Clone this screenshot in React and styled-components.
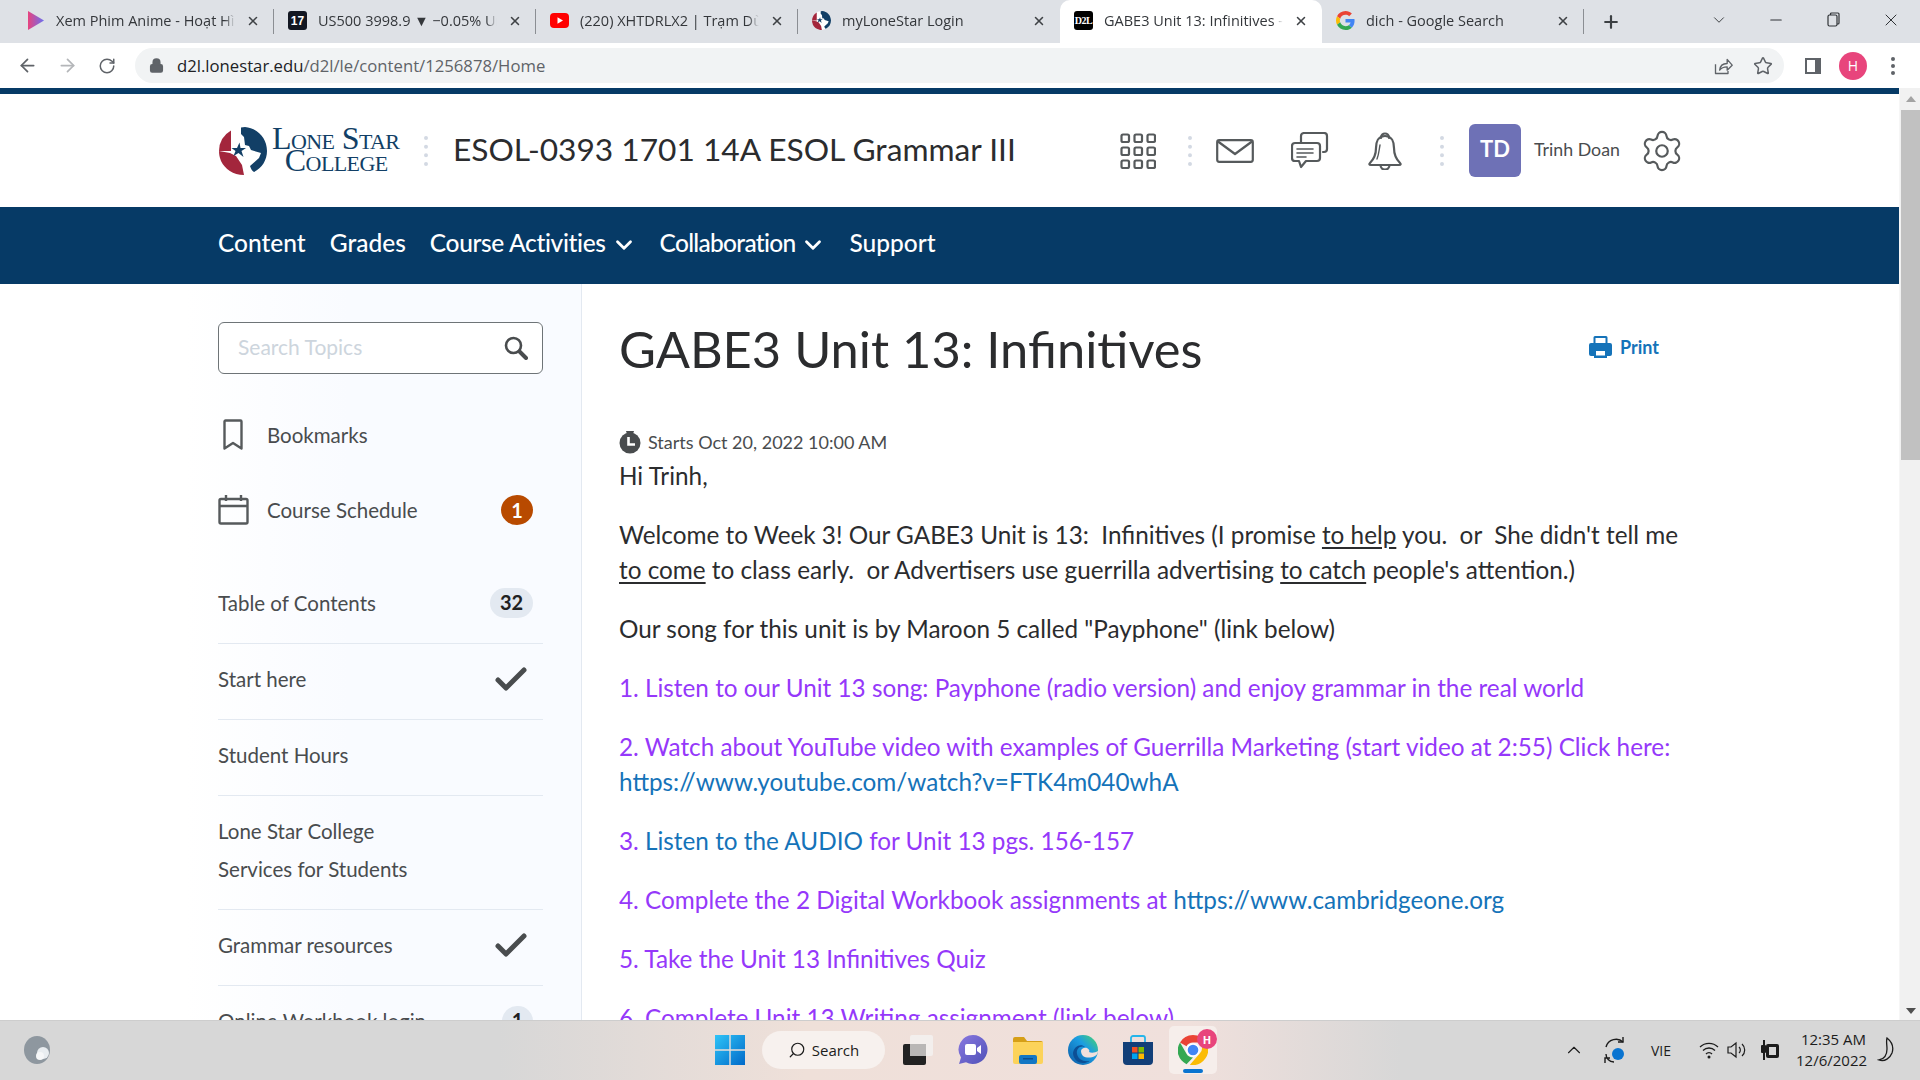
import React from "react";
import styled, { createGlobalStyle } from "styled-components";
import { ArrowLeft, ArrowRight, RotateCw, Lock, Star, Plus, X, Minus, ChevronDown, ChevronUp, Settings, Search as SearchIcon } from "lucide-react";

const Global = createGlobalStyle`
  html, body { margin: 0; padding: 0; background: #fff; }
  * { box-sizing: border-box; }
  #root { width: 1920px; height: 1080px; overflow: hidden; }
`;

const Shell = styled.div`
  width: 1920px; height: 1080px; display: flex; flex-direction: column; overflow: hidden;
  font-family: Lato, "Noto Sans", sans-serif; color: #202122;
`;

/* browser chrome */
const TabBar = styled.div`
  height: 43px; flex: none; background: #dee1e6; display: flex; align-items: stretch; padding-left: 12px;
  font-family: "Open Sans", "Noto Sans", sans-serif;
`;
const Tab = styled.div`
  position: relative; width: 262px; flex: none; display: flex; align-items: center; gap: 11px; padding: 0 14px 2px;
  background: ${p => (p.$active ? "#fff" : "transparent")};
  border-radius: ${p => (p.$active ? "10px 10px 0 0" : "0")};
  &::after {
    content: ""; display: ${p => (p.$sep ? "block" : "none")}; position: absolute; right: 0; top: 9px; width: 1px; height: 25px; background: #8b8e93;
  }
`;
const Favicon = styled.span`
  width: 19px; height: 19px; flex: none; display: flex; align-items: center; justify-content: center;
`;
const BadgeIcon = styled(Favicon)`
  background: ${p => p.$bg}; color: #fff; border-radius: ${p => p.$r || 3}px; font-size: ${p => p.$fs || 12}px; font-weight: 700;
  font-family: ${p => p.$serif ? '"Liberation Serif", serif' : '"Liberation Sans", sans-serif'};
  letter-spacing: ${p => p.$ls || 0}px; overflow: hidden;
`;
const TabTitle = styled.span`
  flex: 1; min-width: 0; white-space: nowrap; overflow: hidden; font-size: 14.5px; color: #34373b;
  mask-image: linear-gradient(to right, #000 94%, transparent 100%);
`;
const CloseBox = styled.span`
  width: 14px; flex: none; display: flex; justify-content: center; color: #3f4246;
`;
const NewTab = styled.div`
  width: 54px; display: flex; align-items: center; justify-content: center; color: #3c4043;
`;
const WinControls = styled.div`
  margin-left: auto; display: flex; align-items: center; padding-bottom: 4px;
`;
const WinBtn = styled.div`
  width: 57.5px; height: 36px; display: flex; align-items: center; justify-content: center; color: #2f3236;
`;
const Toolbar = styled.div`
  height: 45px; flex: none; background: #fff; display: flex; align-items: center; padding: 0 7px;
  font-family: "Open Sans", "Noto Sans", sans-serif;
`;
const ToolBtn = styled.div`
  width: 40px; height: 35px; flex: none; display: flex; align-items: center; justify-content: center;
  color: ${p => p.$dim ? "#b4b6b9" : "#5f6368"};
`;
const AddressBar = styled.div`
  flex: 1; height: 35px; margin: 0 9px 0 8px; border-radius: 18px; background: #f1f3f4; display: flex; align-items: center; padding: 0 1px 0 14px; color: #5f6368;
`;
const Url = styled.div`
  flex: 1; margin-left: 13px; font-size: 16.7px; color: #5f6368; white-space: nowrap;
  b { font-weight: 400; color: #202124; }
`;
const Avatar = styled.span`
  width: 28px; height: 28px; border-radius: 50%; background: #e8457c; color: #fff; display: flex; align-items: center; justify-content: center; font-size: 14px;
`;

/* page */
const PageRow = styled.div`
  flex: 1; min-height: 0; display: flex;
`;
const Viewport = styled.div`
  flex: 1; min-width: 0; display: flex; flex-direction: column; overflow: hidden; background: #fff;
`;
const Stripe = styled.div`
  height: 6px; flex: none; background: #063a66;
`;
const Scrollbar = styled.div`
  width: 21px; flex: none; background: #f1f1f1; display: flex; flex-direction: column; align-items: flex-end; border-left: 1px solid #f6f6f6;
`;
const ArrowCell = styled.div`
  width: 19px; height: ${p => p.$h}px; display: flex; align-items: ${p => p.$end ? "flex-end" : "center"}; justify-content: center; padding-bottom: ${p => p.$end ? 6 : 0}px;
  &::before {
    content: ""; width: 0; height: 0; border-left: 5px solid transparent; border-right: 5px solid transparent;
    ${p => p.$down ? "border-top: 6px solid #505050;" : "border-bottom: 6px solid #a3a3a3;"}
  }
`;
const Thumb = styled.div`
  width: 19px; height: 350px; background: #c1c1c1; flex: none;
`;
const Grow = styled.div`flex: 1;`;

const Header = styled.header`
  height: 113px; flex: none; display: flex; align-items: center; padding: 0 218px 0 219px;
`;
const LogoWrap = styled.div`
  display: flex; align-items: center; gap: 5px; width: 181px;
`;
const LogoText = styled.div`
  font-family: "Liberation Serif", serif; font-variant: small-caps; color: #123f66; font-size: 32px; line-height: 22px; text-align: center; white-space: nowrap;
  letter-spacing: -0.6px; margin-top: -3px;
  span { display: block; }
  span + span { margin-left: 1px; }
`;
const DotDivider = styled.div`
  width: 4px; height: 30px; flex: none; border-left: 4px dotted #d3d9e3; margin-left: ${p => p.$ml}px;
`;
const CourseTitle = styled.h1`
  margin: 0 0 3px 25px; font-size: 31.7px; font-weight: 400; white-space: nowrap; color: #2b2c2e;
`;
const HeadRight = styled.div`
  margin-left: auto; display: flex; align-items: center; color: #565a5c;
`;
const HeadIconGroup = styled.div`
  display: flex; gap: 37px; margin-left: 24px;
`;
const HeadIcon = styled.span`
  width: 38px; height: 38px; display: flex; align-items: center; justify-content: center;
`;
const UserTile = styled.div`
  width: 52px; height: 53px; margin-left: 25px; background: #6e71b6; border-radius: 6px; color: #fff; font-weight: 700; font-size: 22px;
  display: flex; align-items: center; justify-content: center; padding-bottom: 4px;
`;
const UserName = styled.div`
  margin-left: 13px; width: 85px; font-size: 17.8px; white-space: nowrap; color: #494c4e; padding-bottom: 4px;
`;
const GearWrap = styled.span`
  margin: 0 -4px 0 20px; display: flex; color: #565a5c;
`;

const Nav = styled.nav`
  height: 77px; flex: none; background: #063a66; display: flex; align-items: center; padding: 0 0 7px 218px; color: #fff; gap: 24px;
`;
const NavItem = styled.a`
  display: flex; align-items: center; font-size: 24.5px; font-weight: 500; color: #fff; white-space: nowrap;
  letter-spacing: ${p => p.$ls || 0}px;
  svg { margin: 5px -1px 0 5px; }
`;
const Body = styled.div`
  flex: 1; min-height: 0; display: flex; overflow: hidden;
`;
const Sidebar = styled.aside`
  width: 582px; flex: none; padding: 38px 38px 0 218px; border-right: 1px solid #e3e9f1;
  background: linear-gradient(to right, #fff 32%, #f9fbff 60%);
`;
const SearchBox = styled.div`
  height: 52px; border: 1px solid #6e7477; border-radius: 6px; background: #fff; display: flex; align-items: center; justify-content: space-between; padding: 0 14px 0 19px;
  color: #494c4e;
`;
const Placeholder = styled.span`
  font-size: 21px; color: #cdd5dd; padding-bottom: 4px;
`;
const QuickLinks = styled.div`
  margin-top: 23px;
`;
const QuickLink = styled.div`
  height: 75px; display: flex; align-items: center; font-size: 20.5px; color: #494c4e;
`;
const QuickIcon = styled.span`
  width: 49px; flex: none; display: flex; padding-left: ${p => p.$pl || 0}px; color: #565a5c;
`;
const CountDot = styled.span`
  margin-left: auto; margin-right: 10px; width: 32px; height: 30px; border-radius: 50%; background: #b84a00; color: #fff; font-weight: 700; font-size: 20px; display: flex; align-items: center; justify-content: center;
`;
const TocList = styled.div`
  margin-top: 21px;
`;
const TocRow = styled.div`
  min-height: 76px; padding: 16px 10px 21px 0; display: flex; align-items: center; justify-content: space-between; font-size: 20.5px; line-height: 38px; color: #494c4e;
  border-bottom: 1px solid #e3e9f1;
`;
const Pill = styled.span`
  min-width: ${p => p.$w}px; height: 30px; border-radius: 15px; background: #e3e9f1; color: #202122; font-weight: 700; font-size: 20px; line-height: 28px; text-align: center;
`;
const CheckWrap = styled.span`
  display: flex; margin-right: 6px; margin-top: -1px;
`;

const Main = styled.main`
  flex: 1; min-width: 0; padding: 36px 0 0 37px; overflow: hidden;
`;
const Column = styled.div`
  width: 1070px;
`;
const TitleRow = styled.div`
  display: flex; justify-content: space-between; align-items: center; padding-right: 30px; height: 58px; margin-bottom: 48px;
`;
const PageTitle = styled.h2`
  margin: 0; font-size: 50.6px; font-weight: 400; line-height: 58px; color: #2b2c2e; white-space: nowrap;
`;
const PrintLink = styled.a`
  display: flex; align-items: center; gap: 8px; color: #1573b9; font-size: 18px; font-weight: 700; margin-bottom: 5px;
`;
const Meta = styled.div`
  height: 32px; display: flex; align-items: center; gap: 7px; font-size: 18px; color: #494c4e;
`;
const Para = styled.p`
  margin: 0 0 24px; font-size: 24.3px; line-height: 35px; color: #2b2c2e; white-space: pre-wrap;
  u { text-underline-offset: 3px; }
`;
const Visited = styled.span`color: #9538fa;`;
const Link = styled.span`color: #1573b9;`;

/* taskbar */
const Taskbar = styled.footer`
  height: 60px; flex: none; display: flex; align-items: center; padding: 0 0 1px 24px; border-top: 1px solid #cdcdcd;
  background: linear-gradient(90deg, #d7d7d7 0, #d7d7d7 26%, #efe0d9 42%, #f0e0dc 62%, #d7d7d7 73%, #d7d7d7 100%);
  font-family: "Open Sans", "Noto Sans", sans-serif; color: #1c1c1c;
`;
const TaskLeft = styled.div`
  width: 691px; flex: none; display: flex;
`;
const TaskCenter = styled.div`
  display: flex; align-items: center;
`;
const TaskSearch = styled.div`
  width: 123px; height: 38px; margin: 0 18px 0 17px; border-radius: 19px; background: #f7f1ee; display: flex; align-items: center; justify-content: center; gap: 6px; font-size: 15px;
  svg { transform: scaleX(-1); }
`;
const TaskApps = styled.div`
  display: flex; gap: 25px; align-items: center;
`;
const TaskIcon = styled.span`
  width: 30px; height: 30px; display: flex; align-items: center; justify-content: center;
`;
const ActiveApp = styled.div`
  position: relative; width: 48px; height: 48px; margin-left: 16px; background: #f6eeeb; border-radius: 5px; display: flex; align-items: center; justify-content: center;
  &::after { content: ""; position: absolute; left: 14px; bottom: 1px; width: 20px; height: 4px; border-radius: 2px; background: #0a74d0; }
`;
const HBadge = styled.span`
  position: absolute; right: 0; top: 3px; width: 20px; height: 20px; border-radius: 50%; background: #e8457c; color: #fff; font-size: 11px; font-weight: 700; display: flex; align-items: center; justify-content: center;
`;
const Tray = styled.div`
  margin-left: auto; display: flex; align-items: center; padding-right: 23px;
`;
const TrayItem = styled.span`
  width: ${p => p.$w}px; margin-left: ${p => p.$ml || 0}px; display: flex; align-items: center; justify-content: center; font-size: ${p => p.$fs || 15}px;
`;
const Clock = styled.div`
  width: 70px; margin-left: 14px; text-align: right; font-size: 15px; line-height: 21px; white-space: nowrap;
`;

/* icons */
const PlayFav = () => (
  <svg width="19" height="19" viewBox="0 0 19 19"><defs><linearGradient id="pf" x1="0" x2="1"><stop offset="0" stopColor="#e8437e" /><stop offset="1" stopColor="#6a6ff0" /></linearGradient></defs><path d="M2 0l16 9.500L2 19z" fill="url(#pf)" /></svg>
);
const YtFav = () => (
  <svg width="19" height="19" viewBox="0 0 19 19"><rect x="0" y="2" width="19" height="15" rx="4" fill="#f00" /><path d="M7.500 6.200l5.500 3.300-5.500 3.300z" fill="#fff" /></svg>
);
const LscMark = ({ s = 48 }) => (
  <svg width={s} height={s} viewBox="0 0 48 48">
    <circle cx="24" cy="24" r="24" fill="#fff" />
    <path d="M26 0C38 1 48 11 48 24c0 9-5 17-13 21-2-1-3-3-4-6l9-8 2-5-10-3-2-4-4-1-1-8-3-3V.5z" fill="#123f66" />
    <path d="M12 3.500A24 24 0 0 0 0 24h12V3.500z" fill="#a3263c" />
    <path d="M0 24c0 3 .5 6 1.500 8.500L2 34c4 8 12 14 23 14l-2-10-6-9-6-3z" fill="#a3263c" />
    <path d="M18 21l2.500-5.500 1 5.500 5.500 0-4.500 3 2 6-5-4-5 3 2-5-4-3z" fill="#123f66" />
  </svg>
);
const GoogleG = () => (
  <svg width="19" height="19" viewBox="0 0 48 48">
    <path fill="#EA4335" d="M24 9.500c3.500 0 6.700 1.200 9.200 3.600l6.900-6.900C35.900 2.400 30.400 0 24 0 14.600 0 6.500 5.400 2.600 13.200l8 6.200C12.500 13.700 17.800 9.500 24 9.500z" />
    <path fill="#4285F4" d="M46.900 24.500c0-1.600-.1-3.100-.4-4.500H24v9h12.900c-.6 3-2.200 5.500-4.700 7.200l7.700 6c4.500-4.200 7-10.300 7-17.700z" />
    <path fill="#FBBC05" d="M10.500 28.600c-.5-1.400-.8-3-.8-4.600s.3-3.200.8-4.600l-8-6.200C1 16.500 0 20.100 0 24s1 7.500 2.600 10.800l7.900-6.200z" />
    <path fill="#34A853" d="M24 48c6.500 0 11.900-2.100 15.900-5.800l-7.700-6c-2.200 1.400-4.900 2.300-8.200 2.300-6.200 0-11.500-4.200-13.400-9.900l-8 6.200C6.500 42.600 14.600 48 24 48z" />
  </svg>
);
const ShareIco = () => (
  <svg width="20" height="20" viewBox="0 0 24 24" fill="none" stroke="#5f6368" strokeWidth="1.600" strokeLinejoin="round"><path d="M3 10v11h15v-3" /><path d="M8 17c.5-5 4-8 9-8V4l6 7-6 6v-4c-4 0-7 1-9 4z" /></svg>
);
const PanelIco = () => (
  <svg width="18" height="18" viewBox="0 0 18 18"><path fill="#5f6368" fillRule="evenodd" d="M1 1h16v16H1zM3 3v12h8V3z" /></svg>
);
const Kebab = () => (
  <svg width="4" height="18" viewBox="0 0 4 18" fill="#5f6368"><circle cx="2" cy="2" r="2" /><circle cx="2" cy="9" r="2" /><circle cx="2" cy="16" r="2" /></svg>
);
const RestoreIco = () => (
  <svg width="13" height="15" viewBox="0 0 13 15" fill="none" stroke="#2f3236" strokeWidth="1.200"><rect x="1" y="3" width="9" height="11" rx="1.500" /><path d="M3.500 3V2a1 1 0 0 1 1-1H11a1 1 0 0 1 1 1v9a1 1 0 0 1-1 1h-1" /></svg>
);
const GridIco = () => (
  <svg width="36" height="36" viewBox="0 0 36 36" fill="none" stroke="#565a5c" strokeWidth="2.200">
    {[0, 13, 26].flatMap(y => [0, 13, 26].map(x => <rect key={`${x}-${y}`} x={x + 1.500} y={y + 1.500} width="7.500" height="7.500" rx="1.500" />))}
  </svg>
);
const MailIco = () => (
  <svg width="38" height="24" viewBox="0 0 38 24" fill="none" stroke="#565a5c" strokeWidth="2.200" strokeLinejoin="round"><rect x="1.200" y="1.200" width="35.600" height="21.600" rx="2" /><path d="M2 2.500L19 15 36 2.500" /></svg>
);
const ChatIco = () => (
  <svg width="38" height="37" viewBox="0 0 38 37" fill="none" stroke="#565a5c" strokeWidth="2.200" strokeLinejoin="round" strokeLinecap="round">
    <path d="M10 11V4a3 3 0 0 1 3-3h20a3 3 0 0 1 3 3v13a3 3 0 0 1-3 3h-1" />
    <path d="M4 11h22a3 3 0 0 1 3 3v12a3 3 0 0 1-3 3H15l-5 6-2-6H4a3 3 0 0 1-3-3V14a3 3 0 0 1 3-3z" />
    <path d="M6 17h16M6 21h16M6 25h9" strokeWidth="1.600" />
  </svg>
);
const BellIco = () => (
  <svg width="36" height="38" viewBox="0 0 36 38" fill="none" stroke="#565a5c" strokeWidth="2.200" strokeLinejoin="round" strokeLinecap="round">
    <path d="M14 6c0-6 8-6 8 0" />
    <path d="M18 4c-7 0-9 6-9 12 0 7-2 11-6 15-1 1-1 2 1 2h28c2 0 2-1 1-2-4-4-6-8-6-15 0-6-2-12-9-12z" />
    <path d="M13.500 33c0 6 9 6 9 0" />
    <path d="M13 13c-1 5-1 9-3 14" strokeWidth="1.400" />
  </svg>
);
const BookmarkIco = () => (
  <svg width="20" height="31" viewBox="0 0 20 31" fill="none" stroke="#565a5c" strokeWidth="2.400" strokeLinejoin="round"><path d="M2.500 1.500h15a1 1 0 0 1 1 1v27L10 24l-8.500 5.500v-27a1 1 0 0 1 1-1z" /></svg>
);
const CalIco = () => (
  <svg width="31" height="31" viewBox="0 0 31 31" fill="none" stroke="#565a5c" strokeWidth="2.400" strokeLinejoin="round"><rect x="1.500" y="5" width="28" height="24.500" rx="1.500" /><path d="M1.500 12h28M8 1v6M23 1v6" /></svg>
);
const ClockIco = () => (
  <svg width="22" height="23" viewBox="0 0 22 23"><circle cx="11" cy="12" r="10.500" fill="#494c4e" /><path d="M7 0l8 0-1 3H8z" fill="#494c4e" /><path d="M9.500 6v7.500H16" fill="none" stroke="#fff" strokeWidth="2.600" /></svg>
);
const PrinterIco = () => (
  <svg width="23" height="22" viewBox="0 0 23 22"><path fill="#1573b9" fillRule="evenodd" d="M6 0h11a1.500 1.500 0 0 1 1.500 1.500V7H21a2 2 0 0 1 2 2v9a2 2 0 0 1-2 2h-3v2H5v-2H2a2 2 0 0 1-2-2V9a2 2 0 0 1 2-2h2.500V1.500A1.500 1.500 0 0 1 6 0zm.500 2v5h10V2zM7 15v4.500h9V15z" /></svg>
);
const MagnifyIco = () => (
  <svg width="24" height="24" viewBox="0 0 24 24" fill="none" stroke="#494c4e"><circle cx="9.500" cy="9.500" r="7.500" strokeWidth="2.600" /><path d="M15.500 15.500l6.500 6.500" strokeWidth="4" strokeLinecap="round" /></svg>
);
const CheckIco = () => (
  <svg width="32" height="24" viewBox="0 0 32 24" fill="none" stroke="#494c4e" strokeWidth="5" strokeLinecap="round" strokeLinejoin="round"><path d="M3 13l8 8L29 3" /></svg>
);
const WinIco = () => (
  <svg width="30" height="30" viewBox="0 0 30 30"><defs><linearGradient id="wi" x1="0" y1="0" x2="1" y2="1"><stop offset="0" stopColor="#2fc4f7" /><stop offset="1" stopColor="#0069c9" /></linearGradient></defs><path fill="url(#wi)" d="M0 0h14.300v14.300H0zM15.700 0H30v14.300H15.700zM0 15.700h14.300V30H0zM15.700 15.700H30V30H15.700z" /></svg>
);
const TaskViewIco = () => (
  <svg width="30" height="30" viewBox="0 0 30 30"><rect x="0" y="9" width="23" height="21" rx="2" fill="#222" /><rect x="7" y="0" width="23" height="21" rx="2" fill="#f3f1f0" opacity=".85" /><rect x="7" y="9" width="16" height="12" fill="#b9b7b6" /></svg>
);
const TeamsIco = () => (
  <svg width="30" height="30" viewBox="0 0 30 30"><defs><linearGradient id="ti" x1="0" y1="0" x2="1" y2="1"><stop offset="0" stopColor="#8a78e0" /><stop offset="1" stopColor="#4f52b8" /></linearGradient></defs><path fill="url(#ti)" d="M15 0a14.500 14.500 0 1 1-7 27.200L1 29l2-6.500A14.500 14.500 0 0 1 15 0z" /><rect x="7" y="9" width="11" height="11" rx="2" fill="#fff" /><path d="M19 13l4-3v9l-4-3z" fill="#fff" /></svg>
);
const FolderIco = () => (
  <svg width="30" height="28" viewBox="0 0 30 28"><path d="M0 3a2 2 0 0 1 2-2h9l3 4h14a2 2 0 0 1 2 2v3H0z" fill="#d69f17" /><path d="M0 6h30v20a2 2 0 0 1-2 2H2a2 2 0 0 1-2-2z" fill="#fcd35a" /><rect x="6" y="19" width="18" height="9" rx="2" fill="#1277c4" /><rect x="10" y="22" width="10" height="1.500" fill="#0b4f8f" /></svg>
);
const EdgeIco = () => (
  <svg width="30" height="30" viewBox="0 0 30 30"><defs><linearGradient id="ei" x1="0" y1="1" x2="1" y2="0"><stop offset="0" stopColor="#0c59a4" /><stop offset=".6" stopColor="#1b9de2" /><stop offset="1" stopColor="#4cd964" /></linearGradient></defs><circle cx="15" cy="15" r="15" fill="url(#ei)" /><path d="M17 12c-5-2-9 2-8 7 1 5 6 8 12 7 1 0-2 2-6 2C9 28 5 23 5 18 6 11 13 8 17 12z" fill="#0c4f95" /><path d="M13 16c0-2 3-4 6-3 2 1 3 3 2 4 2 1 6 1 9-1 0 2-1 4-3 5-4 2-9 2-12 0-1-1-2-3-2-5z" fill="#f0e0dc" /></svg>
);
const StoreIco = () => (
  <svg width="30" height="30" viewBox="0 0 30 30"><path d="M8 7V3a2 2 0 0 1 2-2h10a2 2 0 0 1 2 2v4" fill="none" stroke="#26b5ea" strokeWidth="1.800" /><path d="M0 7h30v19a4 4 0 0 1-4 4H4a4 4 0 0 1-4-4z" fill="#123f78" /><path fill="#f25022" d="M9 12h5.500v5.500H9z" /><path fill="#7fba00" d="M15.500 12H21v5.500h-5.500z" /><path fill="#00a4ef" d="M9 18.500h5.500V24H9z" /><path fill="#ffb900" d="M15.500 18.500H21V24h-5.500z" /></svg>
);
const ChromeIco = () => (
  <svg width="30" height="30" viewBox="0 0 48 48"><path fill="#ea4335" d="M24 0a24 24 0 0 1 20.800 12H24a12 12 0 0 0-10.400 6L3.200 12A24 24 0 0 1 24 0z" /><path fill="#34a853" d="M3.200 12l10.400 18A12 12 0 0 0 24 36l-10.400 10.600A24 24 0 0 1 3.200 12z" /><path fill="#fbbc05" d="M44.800 12A24 24 0 0 1 19 47.500L34.400 30a12 12 0 0 0 0-18z" /><circle cx="24" cy="24" r="11" fill="#fff" /><circle cx="24" cy="24" r="8.500" fill="#4285f4" /></svg>
);
const WeatherIco = () => (
  <svg width="28" height="28" viewBox="0 0 28 28"><ellipse cx="13" cy="14" rx="13" ry="14" fill="#8e979f" /><circle cx="19" cy="17" r="6" fill="#e9edf0" /><circle cx="16" cy="20" r="4" fill="#f6f7f8" /></svg>
);
const SyncIco = () => (
  <svg width="24" height="28" viewBox="0 0 24 28" fill="none" stroke="#1c1c1c" strokeWidth="1.400"><path d="M20 6C15 1 5 3 3 11" /><path d="M20 1v5h-5M3 18c0 4 3 8 8 8M2 27v-5h5" /><circle cx="15" cy="18" r="6" fill="#0a74d0" stroke="none" /></svg>
);
const WifiIco = () => (
  <svg width="20" height="18" viewBox="0 0 20 18" fill="none" stroke="#1c1c1c" strokeWidth="1.300"><path d="M1 6a13 13 0 0 1 18 0M4 9.500a8.500 8.500 0 0 1 12 0M7 13a4 4 0 0 1 6 0" /><circle cx="10" cy="16" r="1.500" fill="#1c1c1c" stroke="none" /></svg>
);
const SpeakerIco = () => (
  <svg width="20" height="20" viewBox="0 0 20 20" fill="none" stroke="#1c1c1c" strokeWidth="1.200"><path d="M1 7h3l5-4v14l-5-4H1z" /><path d="M12 7a4 4 0 0 1 0 6M15 4a8 8 0 0 1 0 12" /></svg>
);
const BatteryIco = () => (
  <svg width="20" height="22" viewBox="0 0 20 22" fill="#1c1c1c"><rect x="6" y="5" width="13" height="14" rx="2" /><rect x="3" y="1" width="2" height="5" /><rect x="1" y="6" width="5" height="8" rx="1" /><rect x="3" y="14" width="2" height="7" /><rect x="9" y="8" width="7" height="8" fill="#d7d7d7" /></svg>
);
const MoonIco = () => (
  <svg width="20" height="26" viewBox="0 0 20 26" fill="none" stroke="#1c1c1c" strokeWidth="1.300"><path d="M10 1c5 4 7 9 5 15-2 5-7 9-13 7 5-1 8-5 8-11 0-4-1-8 0-11z" /></svg>
);

const tabs = [
  { icon: <PlayFav />, title: "Xem Phim Anime - Hoạt Hình", sep: true },
  { icon: <BadgeIcon $bg="#131722" $fs={12} $r={3}>17</BadgeIcon>, title: "US500 3998.9 ▼ −0.05% Unnamed", sep: true },
  { icon: <YtFav />, title: "(220) XHTDRLX2 | Trạm Dừng", sep: true },
  { icon: <LscMark s={19} />, title: "myLoneStar Login", sep: false },
  { icon: <BadgeIcon $bg="#000" $fs={10} $r={0} $serif $ls={-0.4}>D2L</BadgeIcon>, title: "GABE3 Unit 13: Infinitives - ESOL", active: true },
  { icon: <GoogleG />, title: "dich - Google Search", sep: true },
];

const tocRows = [
  { label: "Table of Contents", pill: "32", w: 43 },
  { label: "Start here", check: true },
  { label: "Student Hours" },
  { label: <>Lone Star College<br />Services for Students</> },
  { label: "Grammar resources", check: true },
  { label: "Online Workbook login", pill: "1", w: 31 },
];

export default function App() {
  return (
    <Shell>
      <Global />
      <TabBar>
        {tabs.map((t, i) => (
          <Tab key={i} $active={t.active} $sep={t.sep}>
            <Favicon>{t.icon}</Favicon>
            <TabTitle>{t.title}</TabTitle>
            <CloseBox><X size={14} strokeWidth={2.6} /></CloseBox>
          </Tab>
        ))}
        <NewTab><Plus size={20} strokeWidth={2.6} /></NewTab>
        <WinControls>
          <WinBtn><ChevronDown size={18} strokeWidth={1.2} /></WinBtn>
          <WinBtn><Minus size={18} strokeWidth={1.4} /></WinBtn>
          <WinBtn><RestoreIco /></WinBtn>
          <WinBtn><X size={20} strokeWidth={1.2} /></WinBtn>
        </WinControls>
      </TabBar>
      <Toolbar>
        <ToolBtn><ArrowLeft size={21} strokeWidth={2} /></ToolBtn>
        <ToolBtn $dim><ArrowRight size={21} strokeWidth={2} /></ToolBtn>
        <ToolBtn><RotateCw size={18} strokeWidth={2} /></ToolBtn>
        <AddressBar>
          <Lock size={15} strokeWidth={3} fill="#5f6368" />
          <Url><b>d2l.lonestar.edu</b>/d2l/le/content/1256878/Home</Url>
          <ToolBtn><ShareIco /></ToolBtn>
          <ToolBtn><Star size={20} strokeWidth={1.8} /></ToolBtn>
        </AddressBar>
        <ToolBtn><PanelIco /></ToolBtn>
        <ToolBtn><Avatar>H</Avatar></ToolBtn>
        <ToolBtn><Kebab /></ToolBtn>
      </Toolbar>
      <PageRow>
        <Viewport>
          <Stripe />
          <Header>
            <LogoWrap>
              <LscMark />
              <LogoText><span>Lone Star</span><span>College</span></LogoText>
            </LogoWrap>
            <DotDivider $ml={24} />
            <CourseTitle>ESOL-0393 1701 14A ESOL Grammar III</CourseTitle>
            <HeadRight>
              <GridIco />
              <DotDivider $ml={32} />
              <HeadIconGroup>
                <HeadIcon><MailIco /></HeadIcon>
                <HeadIcon><ChatIco /></HeadIcon>
                <HeadIcon><BellIco /></HeadIcon>
              </HeadIconGroup>
              <DotDivider $ml={36} />
              <UserTile>TD</UserTile>
              <UserName>Trinh Doan</UserName>
              <GearWrap><Settings size={46} strokeWidth={1.15} /></GearWrap>
            </HeadRight>
          </Header>
          <Nav>
            <NavItem>Content</NavItem>
            <NavItem>Grades</NavItem>
            <NavItem $ls={-0.35}>Course Activities <ChevronDown size={26} strokeWidth={2.6} /></NavItem>
            <NavItem $ls={-0.7}>Collaboration <ChevronDown size={26} strokeWidth={2.6} /></NavItem>
            <NavItem>Support</NavItem>
          </Nav>
          <Body>
            <Sidebar>
              <SearchBox>
                <Placeholder>Search Topics</Placeholder>
                <MagnifyIco />
              </SearchBox>
              <QuickLinks>
                <QuickLink><QuickIcon $pl={5}><BookmarkIco /></QuickIcon>Bookmarks</QuickLink>
                <QuickLink><QuickIcon><CalIco /></QuickIcon>Course Schedule<CountDot>1</CountDot></QuickLink>
              </QuickLinks>
              <TocList>
                {tocRows.map((r, i) => (
                  <TocRow key={i}>
                    <span>{r.label}</span>
                    {r.pill && <Pill $w={r.w}>{r.pill}</Pill>}
                    {r.check && <CheckWrap><CheckIco /></CheckWrap>}
                  </TocRow>
                ))}
              </TocList>
            </Sidebar>
            <Main>
              <Column>
                <TitleRow>
                  <PageTitle>GABE3 Unit 13: Infinitives</PageTitle>
                  <PrintLink><PrinterIco />Print</PrintLink>
                </TitleRow>
                <Meta><ClockIco />Starts Oct 20, 2022 10:00 AM</Meta>
                <Para>Hi Trinh,</Para>
                <Para>Welcome to Week 3! Our GABE3 Unit is 13:  Infinitives (I promise <u>to help</u> you.  or  She didn't tell me <u>to come</u> to class early.  or Advertisers use guerrilla advertising <u>to catch</u> people's attention.)</Para>
                <Para>Our song for this unit is by Maroon 5 called "Payphone" (link below)</Para>
                <Para><Visited>1. Listen to our Unit 13 song: Payphone (radio version) and enjoy grammar in the real world</Visited></Para>
                <Para><Visited>2. Watch about YouTube video with examples of Guerrilla Marketing (start video at 2:55) Click here: </Visited><Link>https://www.youtube.com/watch?v=FTK4m040whA</Link></Para>
                <Para><Visited>3. </Visited><Link>Listen to the AUDIO</Link><Visited> for Unit 13 pgs. 156-157</Visited></Para>
                <Para><Visited>4. Complete the 2 Digital Workbook assignments at </Visited><Link>https://www.cambridgeone.org</Link></Para>
                <Para><Visited>5. Take the Unit 13 Infinitives Quiz</Visited></Para>
                <Para><Visited>6. Complete Unit 13 Writing assignment (link below)</Visited></Para>
              </Column>
            </Main>
          </Body>
        </Viewport>
        <Scrollbar>
          <ArrowCell $h={22} />
          <Thumb />
          <Grow />
          <ArrowCell $h={22} $down $end />
        </Scrollbar>
      </PageRow>
      <Taskbar>
        <TaskLeft><WeatherIco /></TaskLeft>
        <TaskCenter>
          <WinIco />
          <TaskSearch><SearchIcon size={18} strokeWidth={1.6} />Search</TaskSearch>
          <TaskApps>
            <TaskIcon><TaskViewIco /></TaskIcon>
            <TaskIcon><TeamsIco /></TaskIcon>
            <TaskIcon><FolderIco /></TaskIcon>
            <TaskIcon><EdgeIco /></TaskIcon>
            <TaskIcon><StoreIco /></TaskIcon>
          </TaskApps>
          <ActiveApp><ChromeIco /><HBadge>H</HBadge></ActiveApp>
        </TaskCenter>
        <Tray>
          <TrayItem $w={30}><ChevronUp size={22} strokeWidth={1.2} /></TrayItem>
          <TrayItem $w={30} $ml={11}><SyncIco /></TrayItem>
          <TrayItem $w={40} $ml={11} $fs={14}>VIE</TrayItem>
          <TrayItem $w={24} $ml={16}><WifiIco /></TrayItem>
          <TrayItem $w={24} $ml={4}><SpeakerIco /></TrayItem>
          <TrayItem $w={24} $ml={9}><BatteryIco /></TrayItem>
          <Clock>12:35 AM<br />12/6/2022</Clock>
          <TrayItem $w={20} $ml={11}><MoonIco /></TrayItem>
        </Tray>
      </Taskbar>
    </Shell>
  );
}
